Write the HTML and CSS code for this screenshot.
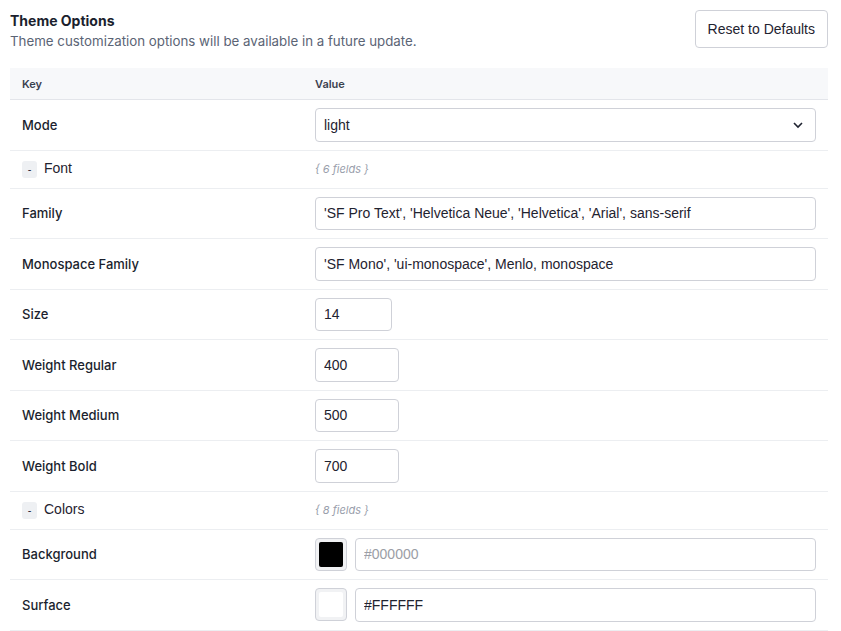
FILE: index.html
```html
<!DOCTYPE html>
<html lang="en">
<head>
  <meta charset="UTF-8">
  <title>Theme Options</title>
  <link rel="stylesheet" href="styles.css">
</head>
<body>

<!-- HEADER -->
<div class="head">
  <div>
    <h3 class="title">Theme Options</h3>
    <p class="sub">Theme customization options will be available in a future update.</p>
  </div>
  <button class="reset-btn">Reset to Defaults</button>
</div>

<!-- OPTIONS TABLE -->
<table class="opts">
  <thead>
    <tr><th class="kcol">Key</th><th>Value</th></tr>
  </thead>
  <tbody>
    <tr>
      <td class="key">Mode</td>
      <td>
        <div class="select">
          <span>light</span>
          <svg width="12" height="8" viewBox="0 0 12 8"><path d="M2 2l4 4 4-4" fill="none" stroke="#1f2330" stroke-width="1.6"/></svg>
        </div>
      </td>
    </tr>
    <tr class="group">
      <td><span class="toggle">-</span>Font</td>
      <td class="count">{ 6 fields }</td>
    </tr>
    <tr>
      <td class="key">Family</td>
      <td><input class="field" type="text" value="'SF Pro Text', 'Helvetica Neue', 'Helvetica', 'Arial', sans-serif"></td>
    </tr>
    <tr>
      <td class="key">Monospace Family</td>
      <td><input class="field" type="text" value="'SF Mono', 'ui-monospace', Menlo, monospace"></td>
    </tr>
    <tr>
      <td class="key">Size</td>
      <td><input class="field num-sm" type="text" value="14"></td>
    </tr>
    <tr>
      <td class="key">Weight Regular</td>
      <td><input class="field num" type="text" value="400"></td>
    </tr>
    <tr>
      <td class="key">Weight Medium</td>
      <td><input class="field num" type="text" value="500"></td>
    </tr>
    <tr>
      <td class="key">Weight Bold</td>
      <td><input class="field num" type="text" value="700"></td>
    </tr>
    <tr class="group">
      <td><span class="toggle">-</span>Colors</td>
      <td class="count">{ 8 fields }</td>
    </tr>
    <tr>
      <td class="key">Background</td>
      <td>
        <div class="color-row">
          <span class="swatch"><i style="background:#000000"></i></span>
          <input class="field" type="text" placeholder="#000000">
        </div>
      </td>
    </tr>
    <tr>
      <td class="key">Surface</td>
      <td>
        <div class="color-row">
          <span class="swatch"><i style="background:#FFFFFF"></i></span>
          <input class="field" type="text" value="#FFFFFF">
        </div>
      </td>
    </tr>
  </tbody>
</table>

</body>
</html>
```

FILE: styles.css
```css
body {
  margin: 0;
  padding: 10px 13px 0 10px;
  background: #fff;
  font-family: Inter, "Open Sans", sans-serif;
  color: #1b1f2e;
}
.head {
  display: flex;
  justify-content: space-between;
  align-items: flex-start;
  height: 58px;
}
.title {
  margin: 2px 0 0;
  font-size: 14px;
  font-weight: 700;
  color: #1b1f2e;
}
.sub {
  margin: 4px 0 0;
  font-size: 13.3px;
  color: #5b6475;
}
.reset-btn {
  height: 38px;
  padding: 0 12px;
  background: #fff;
  border: 1px solid #cfd1d8;
  border-radius: 4px;
  font-family: "Liberation Sans", Arial, sans-serif;
  font-size: 14px;
  color: #1f2330;
}
.opts {
  width: 818px;
  border-collapse: collapse;
  font-size: 13px;
}
.opts th {
  background: #f7f8fa;
  height: 31px;
  padding: 0 12px;
  text-align: left;
  font-size: 11px;
  font-weight: 600;
  color: #3b4150;
  border-bottom: 1px solid #e3e5ea;
}
.kcol { width: 269px; }
.opts td {
  padding: 8px 12px 8px 12px;
  border-bottom: 1px solid #eceef1;
  vertical-align: middle;
}
.key {
  font-weight: 500;
  color: #1b1f2e;
}
.group td {
  height: 21px;
  font-family: "Liberation Sans", Arial, sans-serif;
  font-size: 14px;
  color: #1f2330;
}
.toggle {
  display: inline-block;
  width: 15px;
  height: 17px;
  line-height: 16px;
  margin-right: 7px;
  background: #eef0f3;
  border-radius: 3px;
  text-align: center;
  font-size: 11px;
  vertical-align: middle;
}
.opts td.count {
  font-family: Inter, sans-serif;
  font-size: 11px;
  font-style: italic;
  color: #9aa0ac;
}
.field, .select {
  box-sizing: border-box;
  height: 33.5px;
  width: 100%;
  padding: 0 8px;
  border: 1px solid #cfd1d8;
  border-radius: 4px;
  background: #fff;
  font-family: "Liberation Sans", Arial, sans-serif;
  font-size: 14px;
  color: #1f2330;
}
.field::placeholder { color: #9b9ea6; }
.num-sm { width: 77px; }
.num { width: 84px; }
.select {
  display: flex;
  align-items: center;
  justify-content: space-between;
  padding-right: 11px;
}
.color-row {
  display: flex;
  align-items: center;
  gap: 8px;
}
.swatch {
  flex: none;
  box-sizing: border-box;
  width: 32px;
  height: 33px;
  padding: 3px;
  border: 1px solid #cfd1d8;
  border-radius: 4px;
  background: #f1f2f4;
}
.swatch i {
  display: block;
  height: 100%;
  border-radius: 2px;
}
```
